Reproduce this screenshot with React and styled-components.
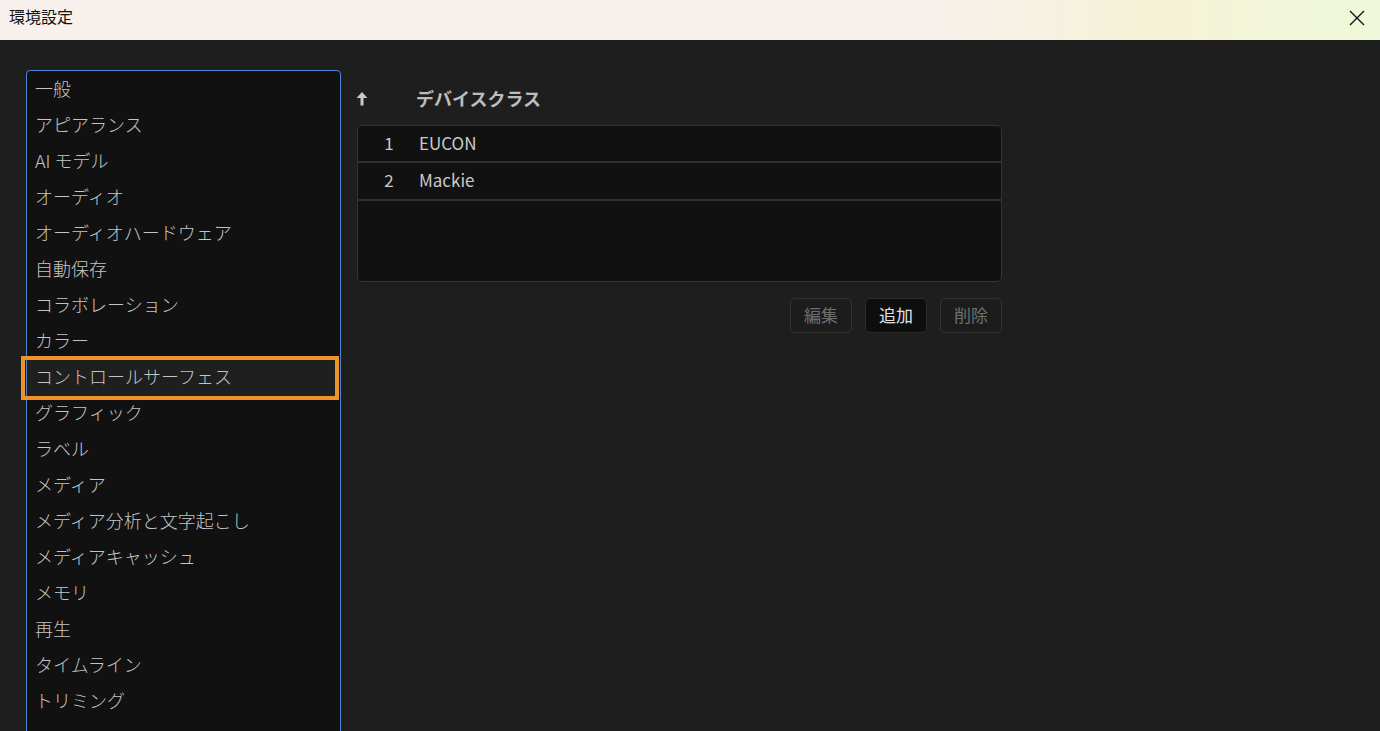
import styled, { createGlobalStyle } from 'styled-components';

const GlobalStyle = createGlobalStyle`
  html, body {
    margin: 0;
    padding: 0;
    height: 100%;
    overflow: hidden;
    background: #1e1e1e;
  }
  body {
    font-family: "Noto Sans CJK JP", "Noto Sans", sans-serif;
  }
`;

const categories = [
  '一般',
  'アピアランス',
  'AI モデル',
  'オーディオ',
  'オーディオハードウェア',
  '自動保存',
  'コラボレーション',
  'カラー',
  'コントロールサーフェス',
  'グラフィック',
  'ラベル',
  'メディア',
  'メディア分析と文字起こし',
  'メディアキャッシュ',
  'メモリ',
  '再生',
  'タイムライン',
  'トリミング',
];

const devices = ['EUCON', 'Mackie'];

const Window = styled.div`
  display: flex;
  flex-direction: column;
  width: 1380px;
  height: 731px;
  background: #1e1e1e;
`;

const TitleBar = styled.div`
  height: 40px;
  flex: none;
  display: flex;
  align-items: center;
  justify-content: space-between;
  padding: 0 8px 0 9px;
  background: linear-gradient(90deg, #f8f0ec 0%, #f7f0ea 68%, #f5f3d6 84%, #eff8da 100%);
`;

const Title = styled.span`
  font-size: 16px;
  color: #111;
  margin-top: -8px;
`;

const CloseButton = styled.button`
  width: 30px;
  height: 30px;
  display: flex;
  align-items: center;
  justify-content: center;
  border: none;
  background: transparent;
  padding: 0;
  margin-top: -5px;
`;

const Body = styled.div`
  flex: 1;
  display: flex;
  gap: 16px;
  padding: 30px 0 0 26px;
  overflow: hidden;
`;

const CategoryList = styled.ul`
  list-style: none;
  margin: 0;
  padding: 1px 0 0;
  width: 313px;
  height: 700px;
  flex: none;
  background: #111111;
  border: 1px solid #4b86d0;
  border-radius: 4px;
`;

const CategoryItem = styled.li`
  position: relative;
  height: 36px;
  box-sizing: border-box;
  display: flex;
  align-items: center;
  padding: 0 0 4px 8px;
  font-size: 18px;
  font-weight: 300;
  color: #c4c4c4;
  background: ${(p) => (p.$active ? '#1f1f1f' : 'transparent')};

  ${(p) =>
    p.$active &&
    `
    &::after {
      content: '';
      position: absolute;
      left: -6px;
      right: 1px;
      top: -4px;
      bottom: -4px;
      border: 4px solid #f0922b;
    }
  `}
`;

const Main = styled.div`
  width: 645px;
  display: flex;
  flex-direction: column;
  padding-top: 12px;
`;

const Header = styled.div`
  height: 36px;
  box-sizing: border-box;
  display: flex;
  align-items: center;
  padding-bottom: 4px;
  margin-bottom: 7px;
`;

const SortIcon = styled.div`
  width: 60px;
  display: flex;
  align-items: center;
  margin-left: -1px;
`;

const HeaderLabel = styled.span`
  font-size: 18px;
  font-weight: 700;
  color: #bdbdbd;
`;

const Table = styled.div`
  height: 155px;
  background: #111111;
  border: 1px solid #333;
  border-radius: 5px;
  overflow: hidden;
`;

const Row = styled.div`
  display: grid;
  grid-template-columns: 61px 1fr;
  align-items: center;
  height: 37px;
  box-sizing: border-box;
  padding-bottom: 3px;
  border-bottom: 2px solid #2f2f2f;
  font-size: 17px;
  color: #cacaca;

  & + & {
    height: 38px;
  }
`;

const Index = styled.span`
  text-align: center;
  padding-left: 1px;
`;

const Actions = styled.div`
  display: flex;
  justify-content: flex-end;
  gap: 13px;
  margin-top: 16px;
`;

const ActionButton = styled.button`
  width: 62px;
  height: 35px;
  border-radius: 5px;
  font-family: inherit;
  font-size: 17px;
  padding: 0 0 3px;
  border: 1px solid ${(p) => (p.$primary ? '#2c2c2c' : '#333')};
  background: ${(p) => (p.$primary ? '#0e0e0e' : '#1c1c1c')};
  color: ${(p) => (p.$primary ? '#e0e0e0' : '#6f6f6f')};
`;

export default function App() {
  return (
    <Window>
      <GlobalStyle />
      <TitleBar>
        <Title>環境設定</Title>
        <CloseButton aria-label="close">
          <svg width="16" height="16" viewBox="0 0 16 16">
            <path d="M1 1 L15 15 M15 1 L1 15" stroke="#111" strokeWidth="1.4" />
          </svg>
        </CloseButton>
      </TitleBar>
      <Body>
        <CategoryList>
          {categories.map((c) => (
            <CategoryItem key={c} $active={c === 'コントロールサーフェス'}>
              {c}
            </CategoryItem>
          ))}
        </CategoryList>
        <Main>
          <Header>
            <SortIcon>
              <svg width="12" height="15" viewBox="0 0 12 15">
                <path d="M6 1 L0.5 7 H4.5 V14.5 H7.5 V7 H11.5 Z" fill="#c8c8c8" />
              </svg>
            </SortIcon>
            <HeaderLabel>デバイスクラス</HeaderLabel>
          </Header>
          <Table>
            {devices.map((d, i) => (
              <Row key={d}>
                <Index>{i + 1}</Index>
                <span>{d}</span>
              </Row>
            ))}
          </Table>
          <Actions>
            <ActionButton disabled>編集</ActionButton>
            <ActionButton $primary>追加</ActionButton>
            <ActionButton disabled>削除</ActionButton>
          </Actions>
        </Main>
      </Body>
    </Window>
  );
}
